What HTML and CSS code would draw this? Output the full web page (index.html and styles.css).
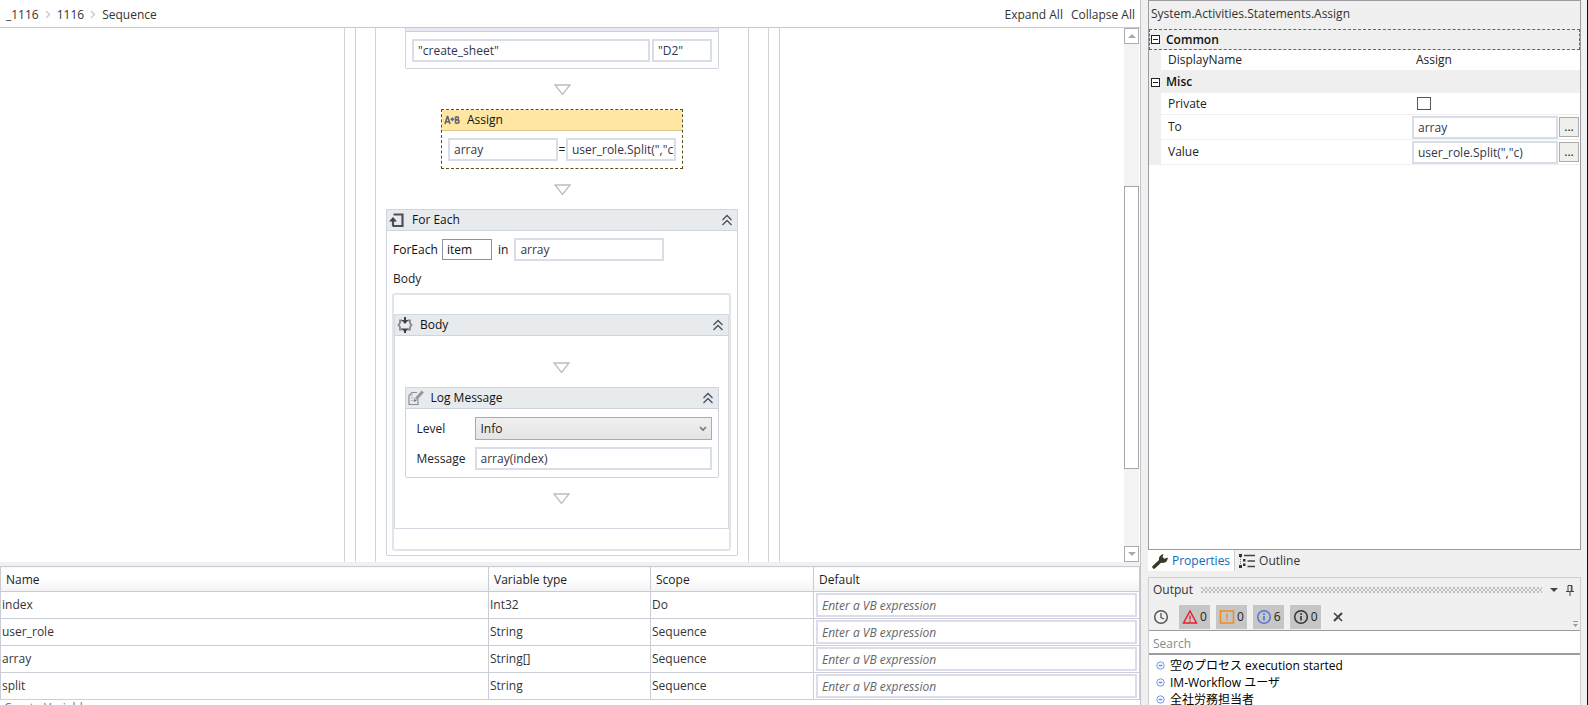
FILE: index.html
```html
<!DOCTYPE html>
<html lang="en">
<head>
<meta charset="utf-8">
<title>Workflow designer</title>
<link rel="stylesheet" href="styles.css">
</head>
<body>
<svg class="defs" aria-hidden="true">
  <symbol id="connector" viewBox="0 0 17 12"><path d="M1 1h15L8.500 10.500z" fill="#fff" stroke="#bdbdc2" stroke-width="1.300"/></symbol>
  <symbol id="collapse" viewBox="0 0 12 12"><path d="M1.500 6L6 1.500 10.500 6M1.500 11L6 6.500 10.500 11" fill="none" stroke="#4a5058" stroke-width="1.300"/></symbol>
  <symbol id="crumb" viewBox="0 0 6 9"><path d="M1 1l3.500 3.500L1 8" fill="none" stroke="#c9cfda" stroke-width="1.500"/></symbol>
  <symbol id="info" viewBox="0 0 16 16"><circle cx="8" cy="8" r="6.300" fill="none" stroke="currentColor" stroke-width="1.500"/><path d="M8 7v4.500M8 4.200v1.700" stroke="currentColor" stroke-width="1.600"/></symbol>
  <symbol id="bullet" viewBox="0 0 9 9"><circle cx="4.500" cy="4.500" r="3.700" fill="#f4f7ff" stroke="#7d9be0"/><path d="M2.800 4.500h3.400" stroke="#5b7fd6" stroke-width="1.200"/></symbol>
</svg>
<div class="app">
  <main class="designer">
    <header class="topbar">
      <nav class="crumbs">
        <a href="#">_1116</a><svg class="crumb-sep"><use href="#crumb"/></svg>
        <a href="#">1116</a><svg class="crumb-sep"><use href="#crumb"/></svg>
        <a href="#">Sequence</a>
      </nav>
      <div class="actions"><button class="plain">Expand All</button><button class="plain">Collapse All</button></div>
    </header>

    <div class="workspace">
      <div class="canvas">
        <div class="lane lane-outer"><div class="lane lane-middle"><div class="lane lane-inner">
          <section class="card card-wide">
            <div class="card-tail"></div>
            <div class="fields cell-fields">
              <input class="expr" aria-label="Sheet name" value="&quot;create_sheet&quot;">
              <input class="expr" aria-label="Cell" value="&quot;D2&quot;">
            </div>
          </section>
          <svg class="connector"><use href="#connector"/></svg>
          <section class="card card-assign">
            <h2 class="card-head head-selected">
              <svg class="icon-assign" viewBox="0 0 16 10"><path d="M1 9l2.300-7.500h.4L6 9M1.800 6.800h3.400M11.500 1.700v6.600M11.500 1.700h1.400a1.500 1.500 0 010 3.200h-1.400M13 4.900h.3a1.700 1.700 0 010 3.400h-1.800" fill="none" stroke="#66676c" stroke-width="1.600"/><path d="M8.300 2.300l2 2-2 2-2-2z" fill="#4a5d9a"/></svg>
              <span>Assign</span>
            </h2>
            <div class="fields assign-fields">
              <input class="expr" aria-label="To" value="array"><span>=</span>
              <input class="expr" aria-label="Value" value="user_role.Split(&quot;,&quot;c)">
            </div>
          </section>
          <svg class="connector"><use href="#connector"/></svg>
          <section class="card card-foreach">
            <h2 class="card-head">
              <svg class="icon" viewBox="0 0 16 16"><path d="M4.500 2.500h9v11.500H4" fill="none" stroke="#4d5156" stroke-width="2.200"/><path d="M4 14.500V8" fill="none" stroke="#4d5156" stroke-width="2.200"/><path d="M0 9.500l4-4.500 4 4.500z" fill="#3f4347"/></svg>
              <span>For Each</span>
              <button class="collapse" aria-label="Collapse For Each"><svg><use href="#collapse"/></svg></button>
            </h2>
            <div class="foreach-row">
              <label for="item">ForEach</label><input id="item" class="box" value="item">
              <label for="list">in</label><input id="list" class="expr" value="array">
            </div>
            <div class="body-label">Body</div>
            <div class="body-drop">
              <section class="body-card">
                <h2 class="card-head">
                  <svg class="icon" viewBox="0 0 16 16"><path d="M5.500 3.500H3v2.500L1.500 8 3 10v2.500h2.500M10.500 3.500H13v2.500L14.500 8 13 10v2.500h-2.500" fill="none" stroke="#85898e" stroke-width="1.800"/><path d="M8 0v4M8 16v-4" stroke="#3f4347" stroke-width="2"/><path d="M4.500 3h7L8 7zM4.500 11.500h7L8 15.500z" fill="#3f4347"/></svg>
                  <span>Body</span>
                  <button class="collapse" aria-label="Collapse Body"><svg><use href="#collapse"/></svg></button>
                </h2>
                <svg class="connector"><use href="#connector"/></svg>
                <section class="card card-wide card-log">
                  <h2 class="card-head">
                    <svg class="icon" viewBox="0 0 16 16"><path d="M9 2.500H4L1 5.500v9h9V9" fill="none" stroke="#8a8e93" stroke-width="1.200"/><path d="M4 2.500v3H1M3 8h3M3 10.500h2" fill="none" stroke="#b5b9be"/><path d="M14.800 1.500L8 9" stroke="#94989c" stroke-width="3"/><path d="M5.500 12l1-3.300 2.300 2z" fill="#6d7074"/></svg>
                    <span>Log Message</span>
                    <button class="collapse" aria-label="Collapse Log Message"><svg><use href="#collapse"/></svg></button>
                  </h2>
                  <div class="log-form">
                    <label for="level">Level</label>
                    <div class="select-wrap"><select id="level"><option>Info</option></select><svg viewBox="0 0 8 6"><path d="M1 1l3 3 3-3" fill="none" stroke="#777" stroke-width="1.600"/></svg></div>
                    <label for="message">Message</label>
                    <input id="message" class="expr" value="array(index)">
                  </div>
                </section>
                <svg class="connector"><use href="#connector"/></svg>
              </section>
            </div>
          </section>
        </div></div></div>
      </div>
      <div class="scrollbar">
        <button class="scroll-btn" aria-label="Scroll up"><svg viewBox="0 0 8 4"><path d="M0 4l4-4 4 4z" fill="#a9a9a9"/></svg></button>
        <div class="scroll-before"></div><div class="thumb"></div><div class="scroll-after"></div>
        <button class="scroll-btn" aria-label="Scroll down"><svg viewBox="0 0 8 4"><path d="M0 0l4 4 4-4z" fill="#a9a9a9"/></svg></button>
      </div>
    </div>

    <div class="variables">
      <table>
        <colgroup><col class="col-name"><col class="col-type"><col class="col-scope"><col></colgroup>
        <thead><tr><th>Name</th><th>Variable type</th><th>Scope</th><th>Default</th></tr></thead>
        <tbody>
          <tr><td>index</td><td>Int32</td><td>Do</td><td class="default"><input class="expr" aria-label="Default of index" placeholder="Enter a VB expression"></td></tr>
          <tr><td>user_role</td><td>String</td><td>Sequence</td><td class="default"><input class="expr" aria-label="Default of user_role" placeholder="Enter a VB expression"></td></tr>
          <tr><td>array</td><td>String[]</td><td>Sequence</td><td class="default"><input class="expr" aria-label="Default of array" placeholder="Enter a VB expression"></td></tr>
          <tr><td>split</td><td>String</td><td>Sequence</td><td class="default"><input class="expr" aria-label="Default of split" placeholder="Enter a VB expression"></td></tr>
        </tbody>
      </table>
      <div class="create">Create Variable</div>
    </div>
  </main>

  <aside class="side">
    <section class="properties">
      <h1 class="prop-title">System.Activities.Statements.Assign</h1>
      <div class="group group-focus"><button class="toggle" aria-label="Collapse Common"></button>Common</div>
      <div class="prop prop-short"><span class="prop-name">DisplayName</span><span class="prop-value">Assign</span></div>
      <div class="group"><button class="toggle" aria-label="Collapse Misc"></button>Misc</div>
      <div class="prop prop-mid"><label class="prop-name" for="private">Private</label><span class="prop-value"><input id="private" type="checkbox"></span></div>
      <div class="prop"><label class="prop-name" for="to">To</label><span class="prop-edit"><input id="to" class="expr" value="array"><button class="more" aria-label="Edit To">...</button></span></div>
      <div class="prop"><label class="prop-name" for="value">Value</label><span class="prop-edit"><input id="value" class="expr" value="user_role.Split(&quot;,&quot;c)"><button class="more" aria-label="Edit Value">...</button></span></div>
    </section>
    <div class="tabs">
      <button class="tab tab-active"><svg viewBox="0 0 16 16"><path d="M2 14l7-6.500" stroke="#3a3826" stroke-width="3.400" stroke-linecap="round"/><path d="M7.500 8.500C6 5.500 7.500 2 11.500 1L10.500 4l1.800 1.700L15.800 4.500C15.800 8.800 12 11 9 9.500z" fill="#3a3826"/></svg>Properties</button>
      <button class="tab"><svg viewBox="0 0 16 16"><path d="M0 1h3v3H0zM0 12h3v3H0zM4 6h2.500v2.500H4zM4 10.500h2.500V13H4z" fill="#333"/><path d="M5 2.500h11M8.500 8H16M8.500 13.500H16" stroke="#444" stroke-width="1.300"/><path d="M1.500 4v8" stroke="#777" stroke-dasharray="1 1"/></svg>Outline</button>
    </div>
    <section class="output">
      <header class="output-head">
        <span>Output</span><div class="grip"></div>
        <button class="head-btn" aria-label="Window position"><svg viewBox="0 0 8 4"><path d="M0 0h8L4 4z" fill="#444"/></svg></button>
        <button class="head-btn" aria-label="Auto hide"><svg class="pin" viewBox="0 0 8 11"><path d="M2 .5h4v6H2zM0 6.500h8M4 6.500V11M5.300 1v5" fill="none" stroke="#444"/></svg></button>
      </header>
      <div class="toolbar">
        <button class="clock" aria-label="Timestamps"><svg viewBox="0 0 16 16"><circle cx="8" cy="8" r="6.300" fill="none" stroke="#555" stroke-width="1.500"/><path d="M8 4v4.500l3 1.500" fill="none" stroke="#555" stroke-width="1.300"/></svg></button>
        <button class="filter red"><svg viewBox="0 0 16 16"><path d="M8 2l6.500 12h-13z" fill="none" stroke="currentColor" stroke-width="1.500"/><path d="M8 6.500v4M8 11.500v1.300" stroke="currentColor" stroke-width="1.400"/></svg><span>0</span></button>
        <button class="filter orange"><svg viewBox="0 0 16 16"><path d="M1.500 2h13v12h-13z" fill="none" stroke="currentColor" stroke-width="1.500"/><path d="M8 4.500v4.500M8 10v1.600" stroke="currentColor" stroke-width="1.400"/></svg><span>0</span></button>
        <button class="filter blue"><svg><use href="#info"/></svg><span>6</span></button>
        <button class="filter dark"><svg><use href="#info"/></svg><span>0</span></button>
        <button class="clear" aria-label="Clear"><svg viewBox="0 0 10 10"><path d="M1 1l8 8" stroke="#444" stroke-width="1.600"/><path d="M9 1L1 9" stroke="#444" stroke-width="2.200"/></svg></button>
        <svg class="overflow" viewBox="0 0 5 6"><path d="M0 .5h5" stroke="#999"/><path d="M0 3h5L2.500 6z" fill="#999"/></svg>
      </div>
      <input class="search" aria-label="Search" placeholder="Search">
      <ul class="log">
        <li><svg><use href="#bullet"/></svg><span lang="ja">空のプロセス execution started</span></li>
        <li><svg><use href="#bullet"/></svg><span lang="ja">IM-Workflow ユーザ</span></li>
        <li><svg><use href="#bullet"/></svg><span lang="ja">全社労務担当者</span></li>
      </ul>
    </section>
  </aside>
</div>
</body>
</html>
```

FILE: styles.css
```css
* { box-sizing: border-box; }
body {
  margin: 0;
  font: 12px/16px "Open Sans", "Noto Sans CJK JP", sans-serif;
  color: #222;
  background: #fff;
}
input, button, select { font: inherit; color: inherit; margin: 0; border-radius: 0; }
button { padding: 0; border: 0; background: none; }
h1, h2 { margin: 0; font: inherit; }
a { color: inherit; text-decoration: none; }
.defs { display: none; }

.app {
  display: grid;
  grid-template-columns: minmax(0, 1fr) 447px;
  height: 100vh;
  overflow: hidden;
}

/* Designer */
.designer {
  display: flex;
  flex-direction: column;
  min-width: 0;
  min-height: 0;
  border-right: 1px solid #c4c4c8;
}
.topbar {
  display: flex;
  flex: none;
  justify-content: space-between;
  align-items: center;
  height: 28px;
  padding: 2px 5px 0 6px;
  border-bottom: 1px solid #c9cad0;
  color: #333;
}
.crumbs { display: flex; align-items: center; gap: 6px; }
.crumb-sep { width: 6px; height: 9px; }
.actions { display: flex; gap: 8px; }
.workspace {
  display: flex;
  flex: 1;
  min-height: 0;
  padding-right: 1px;
}
.canvas {
  display: flex;
  flex: 1;
  justify-content: center;
  min-width: 0;
  overflow: hidden;
}
.lane { border: solid #d2d3da; border-width: 0 1px; }
.lane-outer { display: flex; width: 436px; padding: 0 10px; }
.lane-middle { display: flex; width: 414px; padding: 0 19px; }
.lane-inner {
  display: flex;
  flex-direction: column;
  align-items: center;
  width: 374px;
}
.connector { display: block; flex: none; width: 17px; height: 12px; margin: 15px auto 13px; }

.card { border: 1px solid #cfd4de; border-radius: 0 0 2px 2px; flex: none; }
.card-wide { width: 314px; }
.card-tail { height: 4px; background: #e9e9f5; border-bottom: 1px solid #cfcfdc; }
.lane-inner > .card-wide { border-top: 0; }
.card-head {
  display: flex;
  align-items: center;
  gap: 7px;
  height: 21px;
  padding: 0 4px 0 2px;
  background: #e8ebee;
  border-bottom: 1px solid #cdd4de;
  color: #111;
}
.card-head span { flex: 1; }
.icon { width: 16px; height: 16px; }
.icon-assign { width: 16px; height: 10px; }
.collapse svg { display: block; width: 12px; height: 12px; }

.expr {
  min-width: 0;
  width: 100%;
  height: 23px;
  padding: 0 4px;
  background: #fff;
  border: 2px solid #d8dde7;
  color: #33364a;
}
.fields { display: grid; align-items: center; padding: 7px 6px 6px; }
.cell-fields { grid-template-columns: 1fr 60px; gap: 2px; }

.card-assign { width: 242px; border: 1px dashed #5c5020; border-radius: 0; }
.head-selected { background: #ffe6a2; border-color: #ddc88c; }
.assign-fields { grid-template-columns: 1fr 8px 1fr; text-align: center; padding-bottom: 7px; }
.assign-fields .expr { padding-right: 0; }

.card-foreach { width: 352px; }
.foreach-row {
  display: flex;
  align-items: center;
  gap: 6px;
  padding: 7px 6px 0;
  color: #111;
}
.foreach-row label:first-child { width: 43px; }
.foreach-row .expr { width: 150px; }
.box { width: 50px; height: 21px; padding: 0 4px; border: 1px solid #8f9299; }
.body-label { padding: 10px 6px 6px; }
.body-drop {
  margin: 0 6px 4px 5px;
  padding: 19px 0 20px;
  border: 2px solid #e2e4e8;
  border-radius: 3px;
}
.body-card { border: solid #d4d8e0; border-width: 1px; padding-bottom: 10px; }
.body-card > .connector { margin: 26px auto 13px; }
.card-log { margin: 0 auto; }
.body-card > .card-log + .connector { margin: 15px auto 13px; }
.log-form {
  display: grid;
  grid-template-columns: 51px minmax(0, 1fr);
  align-items: center;
  gap: 7px;
  padding: 8px 6px 7px 11px;
}
.select-wrap { display: grid; align-items: center; }
.select-wrap > * { grid-area: 1 / 1; }
.select-wrap svg { width: 8px; height: 6px; justify-self: end; margin-right: 5px; pointer-events: none; }
select {
  appearance: none;
  width: 100%;
  height: 23px;
  padding: 0 5px;
  border: 1px solid #a9abb0;
  background: linear-gradient(#f0f0f0, #e4e4e4);
}

.scrollbar { display: flex; flex-direction: column; flex: none; width: 15px; background: #f3f3f3; }
.scroll-btn {
  display: grid;
  place-items: center;
  height: 16px;
  border: 1px solid #acacb0;
  background: #fff;
}
.scroll-btn svg { width: 8px; height: 4px; }
.scroll-before { flex: 143; }
.thumb { flex: 283; border: 1px solid #a5a5aa; background: #fff; }
.scroll-after { flex: 77; }

/* Variables */
.variables { flex: none; height: 143px; border-top: 4px solid #f0f0f2; overflow: hidden; }
table { width: 100%; table-layout: fixed; border-collapse: collapse; color: #33343a; }
.col-name { width: 488px; }
.col-type { width: 162px; }
.col-scope { width: 163px; }
th {
  height: 25px;
  padding: 2px 4px 0 5px;
  border: 1px solid #c9cbd4;
  background: linear-gradient(#fff 40%, #f3f3f5);
  font-weight: 400;
  text-align: left;
  color: #1c1c1c;
}
td { height: 27px; padding: 0 1px; border: 1px solid #cbcdd8; }
.default { padding: 0 2px; }
.default .expr { display: block; height: 24px; border-color: #dcdcea; }
.default .expr::placeholder { font-style: italic; color: #666; opacity: 1; }
.create { padding-left: 4px; color: #777; }

/* Side panels */
.side {
  display: flex;
  flex-direction: column;
  min-height: 0;
  padding: 0 6px 0 7px;
  border-right: 1px solid #111;
  background: #f0f0f0;
}
.properties {
  flex: 1;
  min-height: 0;
  border: 1px solid #9c9ca0;
  background: #fff;
  overflow: hidden;
}
.prop-title { height: 28px; padding: 5px 2px; background: #f0f0f0; color: #333; }
.group {
  display: flex;
  align-items: center;
  gap: 6px;
  height: 22px;
  padding: 0 2px;
  background: #efefef;
  font-weight: 600;
  color: #111;
}
.group-focus { height: 21px; border: 1px dashed #666; padding: 0 1px; }
.toggle {
  width: 9px;
  height: 9px;
  border: 1px solid #222;
  background: linear-gradient(#222, #222) center / 5px 1px no-repeat #fff;
}
.prop {
  display: grid;
  grid-template-columns: minmax(0, 251px) minmax(0, 1fr);
  align-items: center;
  height: 25px;
  border-left: 12px solid #efefef;
  border-bottom: 1px solid #efefef;
}
.prop-short { height: 21px; }
.prop-mid { height: 22px; }
.prop-name { padding-left: 7px; }
.prop-value { display: flex; padding-left: 4px; }
.prop-value input {
  appearance: none;
  width: 14px;
  height: 13px;
  margin-left: 1px;
  border: 1px solid #555;
}
.prop-edit { display: flex; align-items: center; gap: 1px; padding-right: 1px; }
.more { flex: none; width: 20px; height: 20px; border: 1px solid #adadb0; background: #efefec; line-height: 14px; color: #111; }

.tabs { display: flex; flex: none; height: 27px; padding-bottom: 6px; }
.tab { display: flex; align-items: center; gap: 4px; padding: 0 4px; color: #333; }
.tab svg { width: 16px; height: 16px; }
.tab-active { background: #fff; color: #0e6cb8; border-right: 1px solid #d0d0d0; }

.output { flex: none; height: 128px; border: 1px solid #cfcfd2; border-bottom: 0; overflow: hidden; }
.output-head { display: flex; align-items: center; gap: 8px; height: 24px; padding: 0 6px 0 4px; color: #333; }
.grip {
  flex: 1;
  height: 6px;
  background:
    linear-gradient(#b4b4b4, #b4b4b4) 0 0 / 1px 1px,
    radial-gradient(circle at 1px 1px, #aaa 0 1px, transparent 1px) 0 0 / 4px 4px,
    radial-gradient(circle at 1px 1px, #aaa 0 1px, transparent 1px) 2px 2px / 4px 4px;
  background-repeat: no-repeat, repeat, repeat;
  opacity: 0.7;
}
.head-btn svg { display: block; width: 8px; height: 4px; }
.head-btn .pin { height: 11px; }
.toolbar { display: flex; align-items: center; gap: 6px; height: 28px; padding: 1px 2px 0 4px; }
.toolbar svg { width: 16px; height: 16px; display: block; }
.clock { margin-right: 4px; }
.filter { display: flex; align-items: center; gap: 2px; height: 24px; padding: 0 3px; background: #c6c6c6; }
.filter span { color: #222; }
.red { color: #e8202a; }
.orange { color: #f08c1e; }
.blue { color: #5572d8; }
.dark { color: #333; }
.toolbar .clear { margin-left: 6px; }
.clear svg { width: 10px; height: 10px; }
.toolbar .overflow { width: 5px; height: 6px; margin: 14px 0 0 auto; }
.search {
  display: block;
  width: 100%;
  height: 25px;
  padding: 2px 4px 0;
  border: solid #9c9ca0;
  border-width: 1px 0 2px;
  background: #fff;
}
.search::placeholder { color: #8a8a8a; opacity: 1; }
.log { margin: 0; padding: 2px 0 0; list-style: none; background: #fff; height: 60px; color: #000; }
.log li { display: flex; align-items: center; gap: 5px; height: 17px; padding-left: 7px; white-space: nowrap; }
.log svg { width: 9px; height: 9px; }
```
